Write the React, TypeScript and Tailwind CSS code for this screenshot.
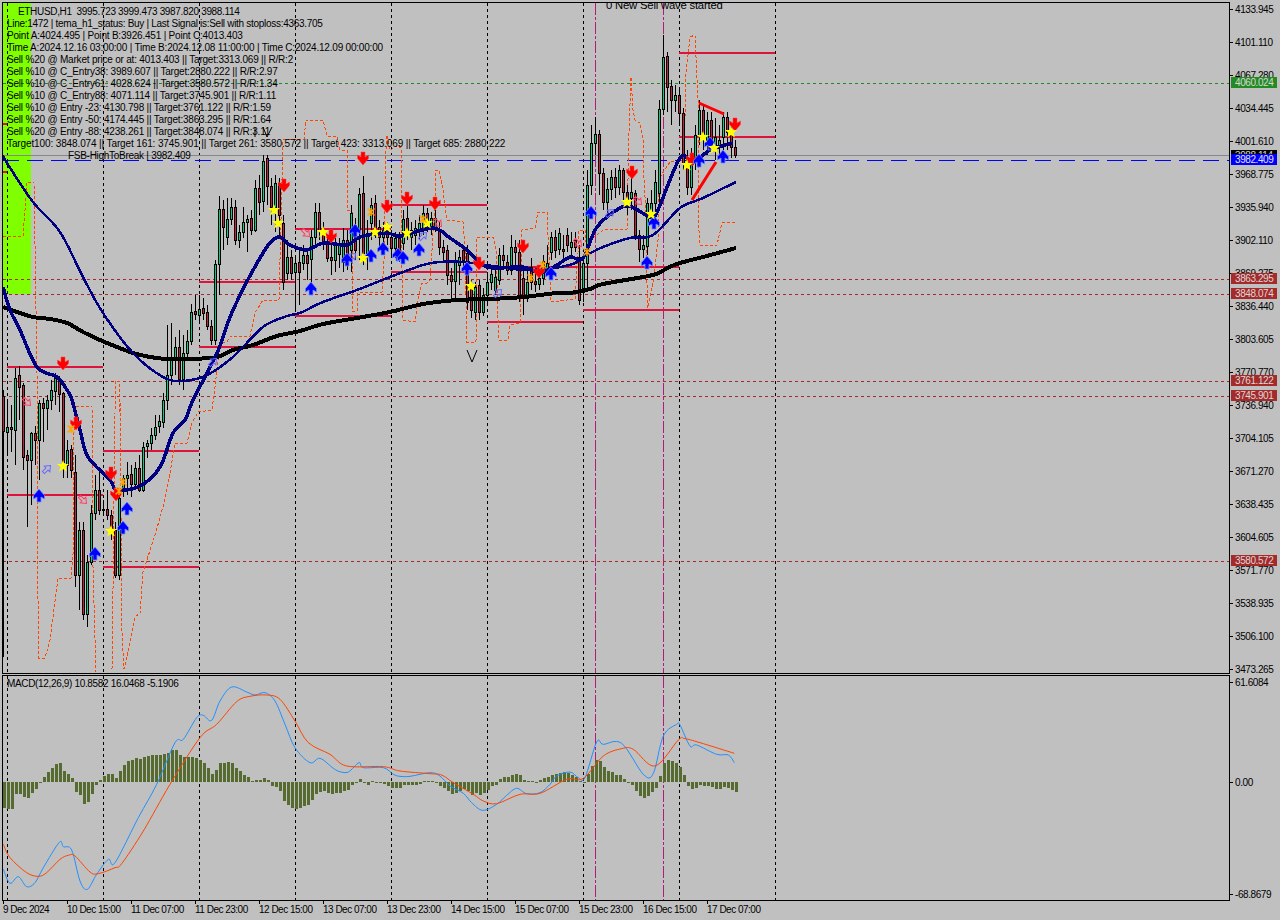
// MT4 style chart window: price panel, MACD panel, axes
const FONT = "font-['Liberation_Sans',Arial,sans-serif]";

type Pt = [number, number];

const priceLabels = [
  '4133.945', '4101.110', '4067.280', '4034.445', '4001.610', '3968.775', '3935.940',
  '3902.110', '3869.275', '3836.440', '3803.605', '3770.770', '3736.940', '3704.105',
  '3671.270', '3638.435', '3604.605', '3571.770', '3538.935', '3506.100', '3473.265',
];

const timeLabels = [
  '9 Dec 2024', '10 Dec 15:00', '11 Dec 07:00', '11 Dec 23:00', '12 Dec 15:00', '13 Dec 07:00',
  '13 Dec 23:00', '14 Dec 15:00', '15 Dec 07:00', '15 Dec 23:00', '16 Dec 15:00', '17 Dec 07:00',
];

const priceTags = [
  { label: '4060.024', top: 'top-[75px]', bg: 'bg-[#228b22]' },
  { label: '3863.295', top: 'top-[271px]', bg: 'bg-[#a52a2a]' },
  { label: '3848.074', top: 'top-[286px]', bg: 'bg-[#a52a2a]' },
  { label: '3761.122', top: 'top-[373px]', bg: 'bg-[#a52a2a]' },
  { label: '3745.901', top: 'top-[388px]', bg: 'bg-[#a52a2a]' },
  { label: '3580.572', top: 'top-[553px]', bg: 'bg-[#a52a2a]' },
];

const infoLines = [
  'Point A:4024.495 | Point B:3926.451 | Point C:4013.403',
  'Time A:2024.12.16 03:00:00 | Time B:2024.12.08 11:00:00 | Time C:2024.12.09 00:00:00',
  'Sell %20 @ Market price or at: 4013.403 || Target:3313.069 || R/R:2',
  'Sell %10 @ C_Entry38: 3989.607 || Target:2880.222 || R/R:2.97',
  'Sell %10 @ C_Entry61: 4028.624 || Target:3580.572 || R/R:1.34',
  'Sell %10 @ C_Entry88: 4071.114 || Target:3745.901 || R/R:1.11',
  'Sell %10 @ Entry -23: 4130.798 || Target:3761.122 || R/R:1.59',
  'Sell %20 @ Entry -50: 4174.445 || Target:3863.295 || R/R:1.64',
  'Sell %20 @ Entry -88: 4238.261 || Target:3848.074 || R/R:3.11',
];

// [up, body top, body bottom, high, low] in page pixels
const candles: number[][] = [
  [0,396,431,390,657],[1,427,432,400,455],[0,427,429,405,452],[1,378,430,368,465],[0,375,387,366,420],[0,385,457,383,470],[0,455,460,450,527],[1,433,460,432,505],[0,433,440,426,465],[1,403,440,400,480],
  [0,403,408,398,442],[1,400,408,395,430],[1,390,400,380,410],[1,378,391,373,405],[0,380,394,376,412],[0,393,462,392,478],[1,450,465,440,478],[0,449,470,445,478],[0,472,575,455,587],[1,530,575,522,610],
  [0,530,614,522,620],[1,562,614,555,627],[1,513,562,505,565],[1,490,513,475,520],[0,490,510,472,515],[0,509,510,500,515],[0,509,515,490,520],[0,515,532,510,540],[0,530,575,522,578],[1,498,575,490,580],
  [1,478,488,475,497],[1,475,478,462,495],[0,474,484,465,497],[1,468,484,462,490],[0,468,490,455,492],[1,447,490,442,492],[1,443,446,440,458],[1,435,443,428,450],[1,427,435,415,440],[1,421,426,415,433],
  [1,400,422,393,428],[1,375,400,325,410],[1,357,375,323,385],[1,347,357,337,375],[0,347,379,330,385],[1,353,379,335,390],[1,341,353,330,360],[1,312,341,304,345],[0,311,314,295,320],[1,309,315,295,322],
  [0,308,313,298,320],[0,312,326,305,330],[0,326,340,320,345],[1,264,340,260,345],[1,209,264,196,295],[0,209,227,200,250],[1,219,237,198,245],[1,207,219,198,225],[0,207,240,200,245],[1,232,240,225,248],
  [1,222,232,207,238],[1,219,222,215,252],[0,218,230,210,235],[1,188,230,180,232],[0,188,202,175,215],[1,161,201,155,212],[0,158,186,155,205],[0,186,207,178,225],[1,183,207,175,232],[0,183,215,178,235],
  [0,223,282,215,290],[1,257,273,240,280],[0,257,273,250,280],[1,263,272,255,310],[0,262,272,250,305],[1,255,263,245,270],[0,255,263,248,280],[1,237,259,230,285],[1,212,237,203,245],[0,212,230,203,240],
  [0,230,242,222,250],[0,243,258,235,262],[0,257,260,240,275],[1,245,260,238,272],[1,245,254,238,268],[1,240,262,228,272],[0,240,262,230,270],[1,213,250,205,272],[0,225,250,218,260],[1,194,230,188,260],
  [0,193,253,176,265],[1,233,253,220,270],[1,205,223,198,240],[0,203,227,195,238],[0,227,237,220,250],[1,230,237,222,245],[0,230,237,222,245],[0,237,248,230,255],[1,238,248,232,258],[0,238,252,232,262],
  [1,219,243,210,250],[0,218,230,206,240],[1,230,237,222,250],[1,228,235,220,245],[1,223,229,215,240],[1,213,227,205,235],[0,213,220,208,232],[1,218,228,212,235],[1,218,228,210,232],[0,230,247,222,255],
  [0,247,252,240,262],[0,250,275,245,285],[0,275,281,268,298],[1,260,281,252,298],[1,257,265,250,285],[0,250,260,245,270],[0,253,302,245,310],[0,288,310,280,318],[1,287,312,282,320],[0,285,312,280,320],
  [1,295,312,288,316],[1,282,295,272,305],[1,274,282,268,290],[1,277,290,268,295],[1,255,280,248,285],[0,255,260,245,270],[0,262,270,255,275],[1,247,270,235,275],[0,247,252,240,268],[0,252,297,240,302],
  [0,278,298,265,315],[1,282,298,270,302],[0,267,282,258,290],[0,281,284,272,292],[1,278,284,272,290],[1,261,278,255,285],[1,263,270,245,275],[1,237,252,232,260],[0,237,250,230,258],[1,233,249,228,255],
  [0,249,251,235,258],[0,235,245,228,252],[1,242,247,232,255],[0,240,247,232,252],[0,257,300,245,305],[1,263,292,255,302],[1,185,263,170,292],[1,143,185,125,195],[1,134,143,117,155],[0,134,173,130,195],
  [0,173,202,168,210],[1,189,202,178,215],[1,177,189,170,200],[0,177,187,168,198],[1,170,187,165,195],[0,170,192,168,200],[0,192,207,185,215],[1,192,198,178,210],[0,193,235,190,240],[0,235,249,230,262],
  [1,245,249,235,258],[1,203,246,198,255],[1,203,213,190,225],[1,182,203,170,215],[1,109,193,100,205],[1,57,109,35,115],[0,56,87,52,112],[0,86,100,80,125],[1,95,100,85,112],[0,95,113,88,125],
  [0,113,163,108,170],[0,157,187,150,195],[1,154,187,148,195],[1,135,157,125,170],[1,110,135,100,145],[0,110,137,104,150],[1,120,142,112,155],[0,120,140,112,150],[1,137,147,118,160],[1,140,147,125,158],
  [1,117,137,112,150],[0,117,132,112,150],[0,132,147,125,158],[0,147,155,140,158],
];

const slowMa: Pt[] = [[3,307],[17,312],[33,317],[50,319],[67,323],[83,332],[100,340],[117,347],[133,353],[150,357],[167,359],[190,359],[217,357],[233,350],[253,345],[277,336],[300,331],[323,324],[357,318],[390,312],[423,304],[457,300],[490,299],[523,297],[557,293],[570,293],[590,289],[603,284],[653,275],[667,268],[680,263],[703,257],[736,248]];
const midMa: Pt[] = [[3,155],[7,163],[33,202],[60,232],[83,277],[103,313],[133,353],[163,377],[183,381],[207,375],[233,357],[263,327],[287,316],[300,313],[323,302],[357,290],[390,277],[423,265],[440,262],[463,262],[500,267],[530,270],[570,265],[587,255],[603,247],[630,238],[653,235],[680,208],[703,198],[736,182]];
const fastMa: Pt[] = [[3,287],[10,310],[20,330],[37,367],[57,377],[67,390],[72,400],[80,430],[88,457],[110,480],[117,490],[140,486],[160,467],[173,433],[185,420],[193,400],[217,353],[233,310],[263,253],[278,237],[290,245],[307,250],[323,243],[347,245],[360,237],[387,233],[400,236],[433,228],[450,238],[467,250],[487,267],[523,267],[540,273],[557,265],[570,257],[583,258],[597,227],[620,208],[632,207],[650,217],[657,212],[680,158],[693,163],[710,150],[733,143]];
const stepLine: Pt[] = [[3,236],[23,236],[25,210],[27,182],[34,182],[37,373],[38,600],[39,658],[45,658],[50,640],[58,578],[71,578],[73,557],[74,430],[76,406],[92,406],[93,567],[95,640],[96,672]];
const stepLine2: Pt[] = [[112,669],[113,590],[115,413],[115,381],[119,381],[119,413],[120,400],[122,633],[124,669],[130,643],[135,617],[140,613],[143,572],[155,535],[163,507],[170,473],[175,443],[187,443],[192,423],[198,412],[212,410],[215,387],[218,360],[220,342],[227,342],[230,337],[250,336],[255,313],[263,300],[279,300],[283,140],[304,139],[306,120],[323,120],[327,136],[337,136],[340,150],[347,150],[347,210],[352,212],[352,311],[357,311],[358,293],[362,292],[382,292],[384,260],[386,150],[387,135],[390,150],[399,145],[401,150],[401,215],[403,320],[415,322],[418,300],[422,283],[427,283],[430,280],[432,250],[435,200],[436,170],[439,170],[443,190],[447,220],[463,222],[465,247],[467,342],[476,342],[477,237],[493,237],[496,250],[498,320],[499,340],[508,340],[510,325],[520,323],[522,230],[535,228],[538,212],[547,212],[549,257],[551,302],[575,299],[578,253],[579,230],[585,230],[587,253],[590,240],[603,230],[627,229],[628,180],[629,133],[631,77],[633,110],[635,120],[640,123],[643,140],[644,180],[646,213],[647,283],[648,308],[653,283],[658,240],[658,180],[670,162],[683,160],[685,117],[686,73],[690,37],[695,35],[698,100],[698,217],[700,245],[717,245],[722,223],[735,222]];

const levels: number[][] = [
  [7,103,367],[7,103,495],[103,199,451],[103,199,567],[199,295,282],[199,295,347],[295,391,229],[295,391,316],
  [391,487,205],[391,487,272],[487,583,267],[487,583,322],[583,679,267],[583,679,310],[679,775,53],[679,775,137],[3,7,124],[3,7,172],
];

const redArrows: Pt[] = [[63,364],[76,424],[111,474],[116,495],[284,186],[331,237],[363,159],[387,207],[407,199],[435,204],[479,264],[523,247],[539,272],[632,173],[692,160],[735,125]];
const blueArrows: Pt[] = [[39,495],[95,553],[123,527],[127,508],[311,288],[347,259],[355,230],[371,255],[383,248],[398,254],[403,257],[419,249],[467,268],[551,273],[591,212],[654,222],[647,262],[699,160],[710,143],[723,156]];
const stars: Pt[] = [[63,466],[111,531],[274,210],[278,223],[323,232],[363,258],[375,232],[387,227],[407,233],[427,223],[471,286],[627,202],[651,214],[687,165],[703,137],[714,148],[731,132]];
const crosses: Pt[] = [[71,429],[119,491],[123,482],[371,212],[423,219],[531,278],[543,265],[587,252]];
const hollowBlue: Pt[] = [[47,469],[213,362],[423,236],[498,293],[352,257],[610,213]];
const hollowRed: Pt[] = [[27,402],[83,500],[306,233],[438,223],[578,243],[638,201]];

// histogram tops, read from the crops: y = 670 + v / 3, two runs of bars
const histA = [411,413,413,370,370,378,380,365,355,335,318,303,291,279,276,300,308,320,362,372,398,393,370,342,327,315,309,309,320,300,282,270,267,262,265,258,255,252,252,252,250,246,237,237,252,258,258,258,262,267,276,291,309,297,276,276,273,276,291,300,312,318,330,328,328,321,327,345,348,360,390,402,411,413,411,405,402,387,370,362,360,366,369,366,366,360,357,343,335,324,336,342,331,335,337,338,345,351,351,351];
const histB = [342,342,342,342,339,331,331,331,335,345,351,360,369,366,360,354,360,372,366,372,366,357,345,343,324,318,318,312,309,312,327,329,330,335,327,321,318,312,309,306,303,306,312,318,331,335,309,285,267,270,288,300,303,312,312,324,335,342,360,375,381,375,363,351,315,276,268,270,276,288,312,345,354,351,342,345,345,348,354,354,348,351,357,363];
const hist = [...histA, ...histB];

const zoomA = (p: number[][]): Pt[] => p.map(([x, y]) => [x / 3, 670 + y / 3]);
const zoomB = (p: number[][]): Pt[] => p.map(([x, y]) => [400 + x / 3, 670 + y / 3]);

const macdBlue: Pt[] = [
  ...zoomA([[10,595],[30,637],[55,617],[80,647],[105,635],[130,590],[178,514],[190,527],[215,537],[240,630],[262,655],[290,610],[325,565],[345,575],[415,440],[470,340],[525,215],[550,205],[590,140],[610,133],[635,148],[660,90],[695,48],[740,63],[765,72],[795,65],[825,90],[855,160],[885,230],[930,275],[960,262],[1000,292],[1020,302],[1045,303],[1077,275],[1090,290],[1150,290],[1180,310],[1200,316]]),
  ...zoomB([[30,316],[90,305],[120,315],[150,345],[190,367],[215,395],[248,418],[290,400],[320,373],[350,352],[380,368],[420,365],[450,340],[470,315],[510,303],[535,320],[555,320],[590,213],[610,220],[665,217],[730,310],[760,307],[790,195],[830,160],[840,162],[870,225],[890,222],[950,250],[985,252],[1003,275]]),
];
const macdRed: Pt[] = [
  ...zoomA([[10,520],[30,560],[80,605],[115,616],[140,605],[180,565],[205,553],[225,555],[270,603],[295,608],[345,590],[365,578],[430,480],[510,340],[600,200],[650,160],[710,92],[750,76],[800,72],[840,85],[885,150],[925,215],[990,250],[1040,285],[1150,287],[1200,300]]),
  ...zoomB([[90,308],[125,312],[160,335],[220,370],[250,390],[290,398],[360,370],[420,367],[500,325],[550,322],[610,255],[665,233],[700,235],[765,285],[835,207],[855,203],[900,215],[1003,247]]),
];

const days = [7, 103, 199, 295, 391, 487, 583, 679, 775];
const markers = [595, 663];

const pts = (p: Pt[]) => p.map(([x, y]) => `${x},${y}`).join(' ');

// catmull-rom through the read points, so the averages don't look faceted
const smooth = (p: Pt[]) => {
  let d = `M${p[0][0]} ${p[0][1]}`;
  for (let i = 0; i < p.length - 1; i++) {
    const a = p[Math.max(i - 1, 0)];
    const b = p[i];
    const c = p[i + 1];
    const e = p[Math.min(i + 2, p.length - 1)];
    d += `C${b[0] + (c[0] - a[0]) / 6} ${b[1] + (c[1] - a[1]) / 6} ${c[0] - (e[0] - b[0]) / 6} ${c[1] - (e[1] - b[1]) / 6} ${c[0]} ${c[1]}`;
  }
  return d;
};

const arrowShape = '-2,-7 2,-7 2,-2 5.5,-4 5.5,-0.5 0,6 -5.5,-0.5 -5.5,-4 -2,-2';
const starShape = '0,-6 1.5,-2 6,-2 2.5,1 3.8,5.5 0,3 -3.8,5.5 -2.5,1 -6,-2 -1.5,-2';
const hollowShape = '-1.5,-5 1.5,-5 1.5,0 4,0 0,5 -4,0 -1.5,0';

function VerticalRules({ top, bottom }: { top: number; bottom: number }) {
  return (
    <g shapeRendering="crispEdges">
      {days.map((x) => (
        <line key={x} x1={x + 0.5} x2={x + 0.5} y1={top} y2={bottom} stroke="#000" strokeDasharray="3 3" />
      ))}
      {markers.map((x) => (
        <line key={x} x1={x + 0.5} x2={x + 0.5} y1={top} y2={bottom} stroke="#b01c78" strokeDasharray="12 2 3 2" />
      ))}
    </g>
  );
}

function PriceChart() {
  return (
    <svg viewBox="3 3 1226 670" className="absolute inset-0 w-[1226px] h-[670px]">
      <rect x={3} y={3} width={28} height={291} fill="#7fff00" />
      <VerticalRules top={3} bottom={673} />
      <g shapeRendering="crispEdges" fill="none">
        <line x1={3} x2={1229} y1={83.5} y2={83.5} stroke="#228b22" strokeDasharray="3 3" />
        {[279, 294, 381, 396, 561].map((y) => (
          <line key={y} x1={3} x2={1229} y1={y + 0.5} y2={y + 0.5} stroke="#a52a2a" strokeDasharray="3 3" />
        ))}
        <line x1={3} x2={1229} y1={155.5} y2={155.5} stroke="#808890" />
        <line x1={3} x2={1229} y1={160.5} y2={160.5} stroke="#0000ff" strokeDasharray="16 8" />
        {levels.map(([a, b, y]) => (
          <line key={`${a}-${y}`} x1={a} x2={b} y1={y} y2={y} stroke="#dc143c" strokeWidth={2} />
        ))}
        <polyline points={pts(stepLine)} stroke="#ff4500" strokeDasharray="3 2" />
        <polyline points={pts(stepLine2)} stroke="#ff4500" strokeDasharray="3 2" />
      </g>
      <g shapeRendering="crispEdges">
        {candles.map(([up, top, bottom, high, low], i) => {
          const x = 3 + 4 * i;
          return (
            <g key={i}>
              <line x1={x + 0.5} x2={x + 0.5} y1={high} y2={low} stroke="#000" />
              <rect x={x - 0.5} y={top + 0.5} width={2} height={bottom - top} fill={up ? '#00d282' : '#c8203c'} stroke="#000" />
            </g>
          );
        })}
      </g>
      <path d={smooth(slowMa)} fill="none" stroke="#000" strokeWidth={4} shapeRendering="crispEdges" />
      <path d={smooth(midMa)} fill="none" stroke="#000080" strokeWidth={2.5} shapeRendering="crispEdges" />
      <path d={smooth(fastMa)} fill="none" stroke="#000080" strokeWidth={3.5} shapeRendering="crispEdges" />
      <line x1={692} y1={200} x2={716} y2={162} stroke="#ff0000" strokeWidth={3} />
      <line x1={699} y1={103} x2={724} y2={114} stroke="#ff0000" strokeWidth={3} />
      <polyline points="467,350 472,362 477,350" fill="none" stroke="#000" />
      <path d="M263 127L267 137L272 127M255 127V137" fill="none" stroke="#000" />
      {hollowBlue.map(([x, y]) => (
        <polygon key={`${x}-${y}`} points={hollowShape} transform={`translate(${x} ${y}) rotate(225)`} fill="none" stroke="#6a6aff" />
      ))}
      {hollowRed.map(([x, y]) => (
        <polygon key={`${x}-${y}`} points={hollowShape} transform={`translate(${x} ${y}) rotate(-45)`} fill="none" stroke="#ff4060" />
      ))}
      {redArrows.map(([x, y]) => (
        <polygon key={`${x}-${y}`} points={arrowShape} transform={`translate(${x} ${y})`} fill="#ff0000" stroke="#ff4040" strokeWidth={0.5} />
      ))}
      {blueArrows.map(([x, y]) => (
        <polygon key={`${x}-${y}`} points={arrowShape} transform={`translate(${x} ${y}) rotate(180)`} fill="#0000ff" stroke="#6a8cff" strokeWidth={0.8} />
      ))}
      {stars.map(([x, y]) => (
        <polygon key={`${x}-${y}`} points={starShape} transform={`translate(${x} ${y})`} fill="#ffff00" />
      ))}
      {crosses.map(([x, y]) => (
        <path key={`${x}-${y}`} d={`M${x - 3.5} ${y - 3.5}L${x + 3.5} ${y + 3.5}M${x + 3.5} ${y - 3.5}L${x - 3.5} ${y + 3.5}M${x} ${y - 4}V${y + 4}`} stroke="#ffa500" strokeWidth={1.5} />
      ))}
    </svg>
  );
}

function MacdChart() {
  return (
    <svg viewBox="3 675 1226 224" className="absolute inset-0 w-[1226px] h-[224px]">
      <VerticalRules top={675} bottom={899} />
      <g shapeRendering="crispEdges">
        {hist.map((v, i) => {
          const y = 670 + v / 3;
          return (
            <rect key={i} x={3 + 4 * i - 0.5} y={Math.min(y, 781)} width={3} height={Math.max(Math.abs(y - 781), 1)} fill="#556b2f" />
          );
        })}
      </g>
      <path d={smooth(macdBlue)} fill="none" stroke="#1e90ff" />
      <path d={smooth(macdRed)} fill="none" stroke="#ff4500" />
    </svg>
  );
}

function AxisTick({ label }: { label: string }) {
  return (
    <div className="flex items-center h-[14px] shrink-0">
      <div className="w-[3px] h-px bg-black mr-[2px]" />
      <span>{label}</span>
    </div>
  );
}

export default function App() {
  return (
    <div className={`${FONT} w-[1280px] h-[920px] bg-[#c0c0c0] pl-[2px] pt-[2px] overflow-hidden text-[10px] tracking-[-0.2px] text-black`}>
      {/* Price panel */}
      <div className="flex h-[672px]">
        <div className="relative w-[1228px] border border-black overflow-hidden">
          <PriceChart />
          <div className="absolute left-[4px] top-[3px] flex flex-col leading-[12px] whitespace-pre">
            <div className="h-[12px] pl-[11px] tracking-[-0.33px]">ETHUSD,H1  3995.723 3999.473 3987.820 3988.114</div>
            <div className="h-[12px] tracking-[-0.29px]">Line:1472 | tema_h1_status: Buy | Last Signal is:Sell with stoploss:4363.705</div>
            {infoLines.map((line) => (
              <div key={line} className="h-[12px]">{line}</div>
            ))}
            <div className="h-[12px] tracking-[-0.12px]">Target100: 3848.074 || Target 161: 3745.901 || Target 261: 3580.572 || Target 423: 3313.069 || Target 685: 2880.222</div>
            <div className="h-[12px] pl-[61px] tracking-[-0.28px]">FSB-HighToBreak | 3982.409</div>
          </div>
          <div className="absolute left-[603px] top-[-4px] leading-[12px] text-[11.3px]">0 New Sell wave started</div>
        </div>
        <div className="relative flex-1 flex flex-col gap-[19px] tracking-[-0.42px]">
          {priceLabels.map((label) => (
            <AxisTick key={label} label={label} />
          ))}
          <div className="absolute left-[1px] top-[148px] w-[46px] h-[12px] bg-black text-[#d8d8d8] leading-[12px] pl-[4px]">3988.114</div>
          <div className="absolute left-[1px] top-[152px] w-[46px] h-[11px] bg-[#0000ff] text-[#e0e0e0] leading-[11px] pl-[4px]">3982.409</div>
          {priceTags.map((tag) => (
            <div key={tag.label} className={`absolute left-[1px] ${tag.top} w-[46px] h-[11px] ${tag.bg} text-[#d8d8d8] leading-[11px] pl-[4px]`}>
              {tag.label}
            </div>
          ))}
        </div>
      </div>

      {/* MACD panel */}
      <div className="flex h-[226px] mt-px">
        <div className="relative w-[1228px] border border-black overflow-hidden">
          <MacdChart />
          <div className="absolute left-[4px] top-[2px] leading-[12px] tracking-[-0.34px]">MACD(12,26,9) 10.8582 16.0468 -5.1906</div>
        </div>
        <div className="flex-1 flex flex-col tracking-[-0.42px]">
          <AxisTick label="61.6084" />
          <div className="mt-[86px]"><AxisTick label="0.00" /></div>
          <div className="mt-[98px]"><AxisTick label="-68.8679" /></div>
        </div>
      </div>

      {/* Time axis */}
      <div className="flex ml-px tracking-[-0.5px]">
        {timeLabels.map((label) => (
          <div key={label} className="w-[64px] shrink-0 whitespace-nowrap">
            <div className="w-px h-[3px] bg-black" />
            <div className="h-[14px] leading-[12px]">{label}</div>
          </div>
        ))}
      </div>
    </div>
  );
}
